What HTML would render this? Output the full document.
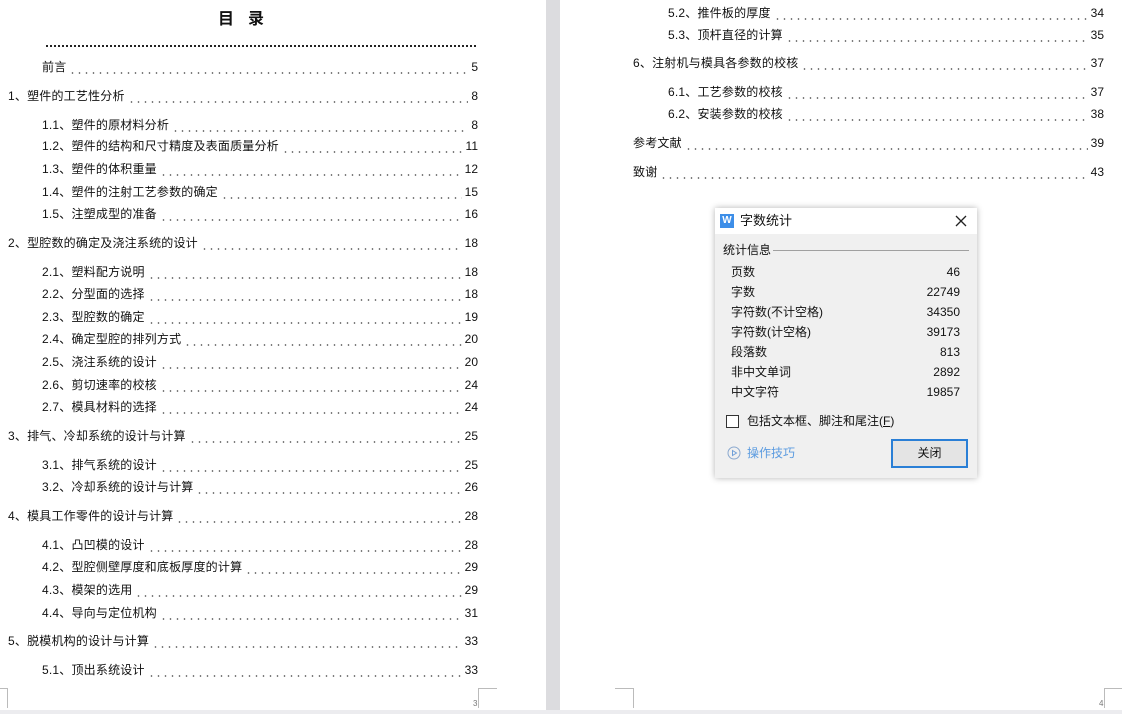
<!DOCTYPE html>
<html><head><meta charset="utf-8"><style>
*{margin:0;padding:0;box-sizing:border-box}
body{width:1122px;height:714px;overflow:hidden;background:#fff;position:relative;font-family:"Liberation Sans","Noto Sans CJK SC",sans-serif;color:#111}
.gap{position:absolute;left:546px;top:0;width:14px;height:714px;background:#dcdcdf}
.bot{position:absolute;left:0;top:710px;width:1122px;height:4px;background:#ececef}
.r{position:absolute;height:16px;display:flex;align-items:flex-end;font-size:12px;line-height:16px;letter-spacing:0.2px;white-space:nowrap}
.r i{flex:1;height:16px;margin:0 3px;background-image:radial-gradient(circle,#555 0.6px,transparent 1px);background-size:7px 4px;background-repeat:repeat-x;background-position:0 12px}
.r b{font-weight:normal;letter-spacing:0}
.c{position:absolute;border-color:#bbb;border-style:solid;border-width:0}
.dlg{position:absolute;left:715px;top:208px;width:262px;height:270px;background:#f0f0f0;box-shadow:0 0 6px rgba(0,0,0,.3);font-size:12px}
.dlg .t{height:26px;background:#fff;position:relative}
.st{position:absolute;left:16px;font-size:12px;line-height:16px}
.sv{position:absolute;right:17px;font-size:12px;line-height:16px}
</style></head><body>
<div class="gap"></div><div class="bot"></div>
<div style="position:absolute;left:218px;top:5px;font-size:16px;font-weight:bold;letter-spacing:14px">目录</div>
<div style="position:absolute;left:46px;top:45px;width:430px;border-top:2px dotted #222"></div>

<div class="r" style="top:59px;left:42px;width:436px"><span>前言</span><i></i><b>5</b></div>
<div class="r" style="top:88px;left:8px;width:470px"><span>1、塑件的工艺性分析</span><i></i><b>8</b></div>
<div class="r" style="top:117px;left:42px;width:436px"><span>1.1、塑件的原材料分析</span><i></i><b>8</b></div>
<div class="r" style="top:138px;left:42px;width:436px"><span>1.2、塑件的结构和尺寸精度及表面质量分析</span><i></i><b>11</b></div>
<div class="r" style="top:161px;left:42px;width:436px"><span>1.3、塑件的体积重量</span><i></i><b>12</b></div>
<div class="r" style="top:184px;left:42px;width:436px"><span>1.4、塑件的注射工艺参数的确定</span><i></i><b>15</b></div>
<div class="r" style="top:206px;left:42px;width:436px"><span>1.5、注塑成型的准备</span><i></i><b>16</b></div>
<div class="r" style="top:235px;left:8px;width:470px"><span>2、型腔数的确定及浇注系统的设计</span><i></i><b>18</b></div>
<div class="r" style="top:264px;left:42px;width:436px"><span>2.1、塑料配方说明</span><i></i><b>18</b></div>
<div class="r" style="top:286px;left:42px;width:436px"><span>2.2、分型面的选择</span><i></i><b>18</b></div>
<div class="r" style="top:309px;left:42px;width:436px"><span>2.3、型腔数的确定</span><i></i><b>19</b></div>
<div class="r" style="top:331px;left:42px;width:436px"><span>2.4、确定型腔的排列方式</span><i></i><b>20</b></div>
<div class="r" style="top:354px;left:42px;width:436px"><span>2.5、浇注系统的设计</span><i></i><b>20</b></div>
<div class="r" style="top:377px;left:42px;width:436px"><span>2.6、剪切速率的校核</span><i></i><b>24</b></div>
<div class="r" style="top:399px;left:42px;width:436px"><span>2.7、模具材料的选择</span><i></i><b>24</b></div>
<div class="r" style="top:428px;left:8px;width:470px"><span>3、排气、冷却系统的设计与计算</span><i></i><b>25</b></div>
<div class="r" style="top:457px;left:42px;width:436px"><span>3.1、排气系统的设计</span><i></i><b>25</b></div>
<div class="r" style="top:479px;left:42px;width:436px"><span>3.2、冷却系统的设计与计算</span><i></i><b>26</b></div>
<div class="r" style="top:508px;left:8px;width:470px"><span>4、模具工作零件的设计与计算</span><i></i><b>28</b></div>
<div class="r" style="top:537px;left:42px;width:436px"><span>4.1、凸凹模的设计</span><i></i><b>28</b></div>
<div class="r" style="top:559px;left:42px;width:436px"><span>4.2、型腔侧壁厚度和底板厚度的计算</span><i></i><b>29</b></div>
<div class="r" style="top:582px;left:42px;width:436px"><span>4.3、模架的选用</span><i></i><b>29</b></div>
<div class="r" style="top:605px;left:42px;width:436px"><span>4.4、导向与定位机构</span><i></i><b>31</b></div>
<div class="r" style="top:633px;left:8px;width:470px"><span>5、脱模机构的设计与计算</span><i></i><b>33</b></div>
<div class="r" style="top:662px;left:42px;width:436px"><span>5.1、顶出系统设计</span><i></i><b>33</b></div>

<div class="r" style="top:5px;left:668px;width:436px"><span>5.2、推件板的厚度</span><i></i><b>34</b></div>
<div class="r" style="top:27px;left:668px;width:436px"><span>5.3、顶杆直径的计算</span><i></i><b>35</b></div>
<div class="r" style="top:55px;left:633px;width:471px"><span>6、注射机与模具各参数的校核</span><i></i><b>37</b></div>
<div class="r" style="top:84px;left:668px;width:436px"><span>6.1、工艺参数的校核</span><i></i><b>37</b></div>
<div class="r" style="top:106px;left:668px;width:436px"><span>6.2、安装参数的校核</span><i></i><b>38</b></div>
<div class="r" style="top:135px;left:633px;width:471px"><span>参考文献</span><i></i><b>39</b></div>
<div class="r" style="top:164px;left:633px;width:471px"><span>致谢</span><i></i><b>43</b></div>

<div class="c" style="left:7px;top:688px;width:1px;height:20px;border-left-width:1px"></div>
<div class="c" style="left:0;top:688px;width:8px;height:1px;border-top-width:1px"></div>
<div class="c" style="left:478px;top:688px;width:19px;height:20px;border-left-width:1px;border-top-width:1px"></div>
<div style="position:absolute;left:473px;top:699px;font-size:8px;color:#777">3</div>
<div class="c" style="left:615px;top:688px;width:19px;height:20px;border-right-width:1px;border-top-width:1px"></div>
<div class="c" style="left:1104px;top:688px;width:18px;height:20px;border-left-width:1px;border-top-width:1px"></div>
<div style="position:absolute;left:1099px;top:699px;font-size:8px;color:#777">4</div>

<div class="dlg">
 <div class="t">
  <div style="position:absolute;left:5px;top:6px;width:14px;height:14px;background:#3d8ee8;color:#fff;font-size:10px;line-height:14px;text-align:center;font-weight:bold">W</div>
  <div style="position:absolute;left:25px;top:4px;font-size:13px;line-height:18px">字数统计</div>
  <svg style="position:absolute;left:240px;top:7px" width="12" height="12"><path d="M1 1L11 11M11 1L1 11" stroke="#222" stroke-width="1.3"/></svg>
 </div>
 <div style="position:absolute;left:8px;top:34px;line-height:16px">统计信息</div>
 <div style="position:absolute;left:58px;top:42px;width:196px;border-top:1px solid #a0a0a0"></div>
 <div class="st" style="top:56px">页数</div><div class="sv" style="top:56px">46</div>
 <div class="st" style="top:76px">字数</div><div class="sv" style="top:76px">22749</div>
 <div class="st" style="top:96px">字符数(不计空格)</div><div class="sv" style="top:96px">34350</div>
 <div class="st" style="top:116px">字符数(计空格)</div><div class="sv" style="top:116px">39173</div>
 <div class="st" style="top:136px">段落数</div><div class="sv" style="top:136px">813</div>
 <div class="st" style="top:156px">非中文单词</div><div class="sv" style="top:156px">2892</div>
 <div class="st" style="top:176px">中文字符</div><div class="sv" style="top:176px">19857</div>
 <div style="position:absolute;left:11px;top:207px;width:13px;height:13px;border:1px solid #333;background:#fff"></div>
 <div style="position:absolute;left:32px;top:205px;line-height:16px">包括文本框、脚注和尾注(<u>F</u>)</div>
 <svg style="position:absolute;left:12px;top:238px" width="14" height="14"><circle cx="7" cy="7" r="6" fill="none" stroke="#8aa8cf"/><path d="M5.5 4.5L9.5 7L5.5 9.5Z" fill="none" stroke="#6f9fd8"/></svg>
 <div style="position:absolute;left:32px;top:237px;line-height:16px;color:#5b9be0">操作技巧</div>
 <div style="position:absolute;left:176px;top:231px;width:77px;height:29px;border:2px solid #2a7fd6;background:#e4e4e4;text-align:center;line-height:25px">关闭</div>
</div>
</body></html>
